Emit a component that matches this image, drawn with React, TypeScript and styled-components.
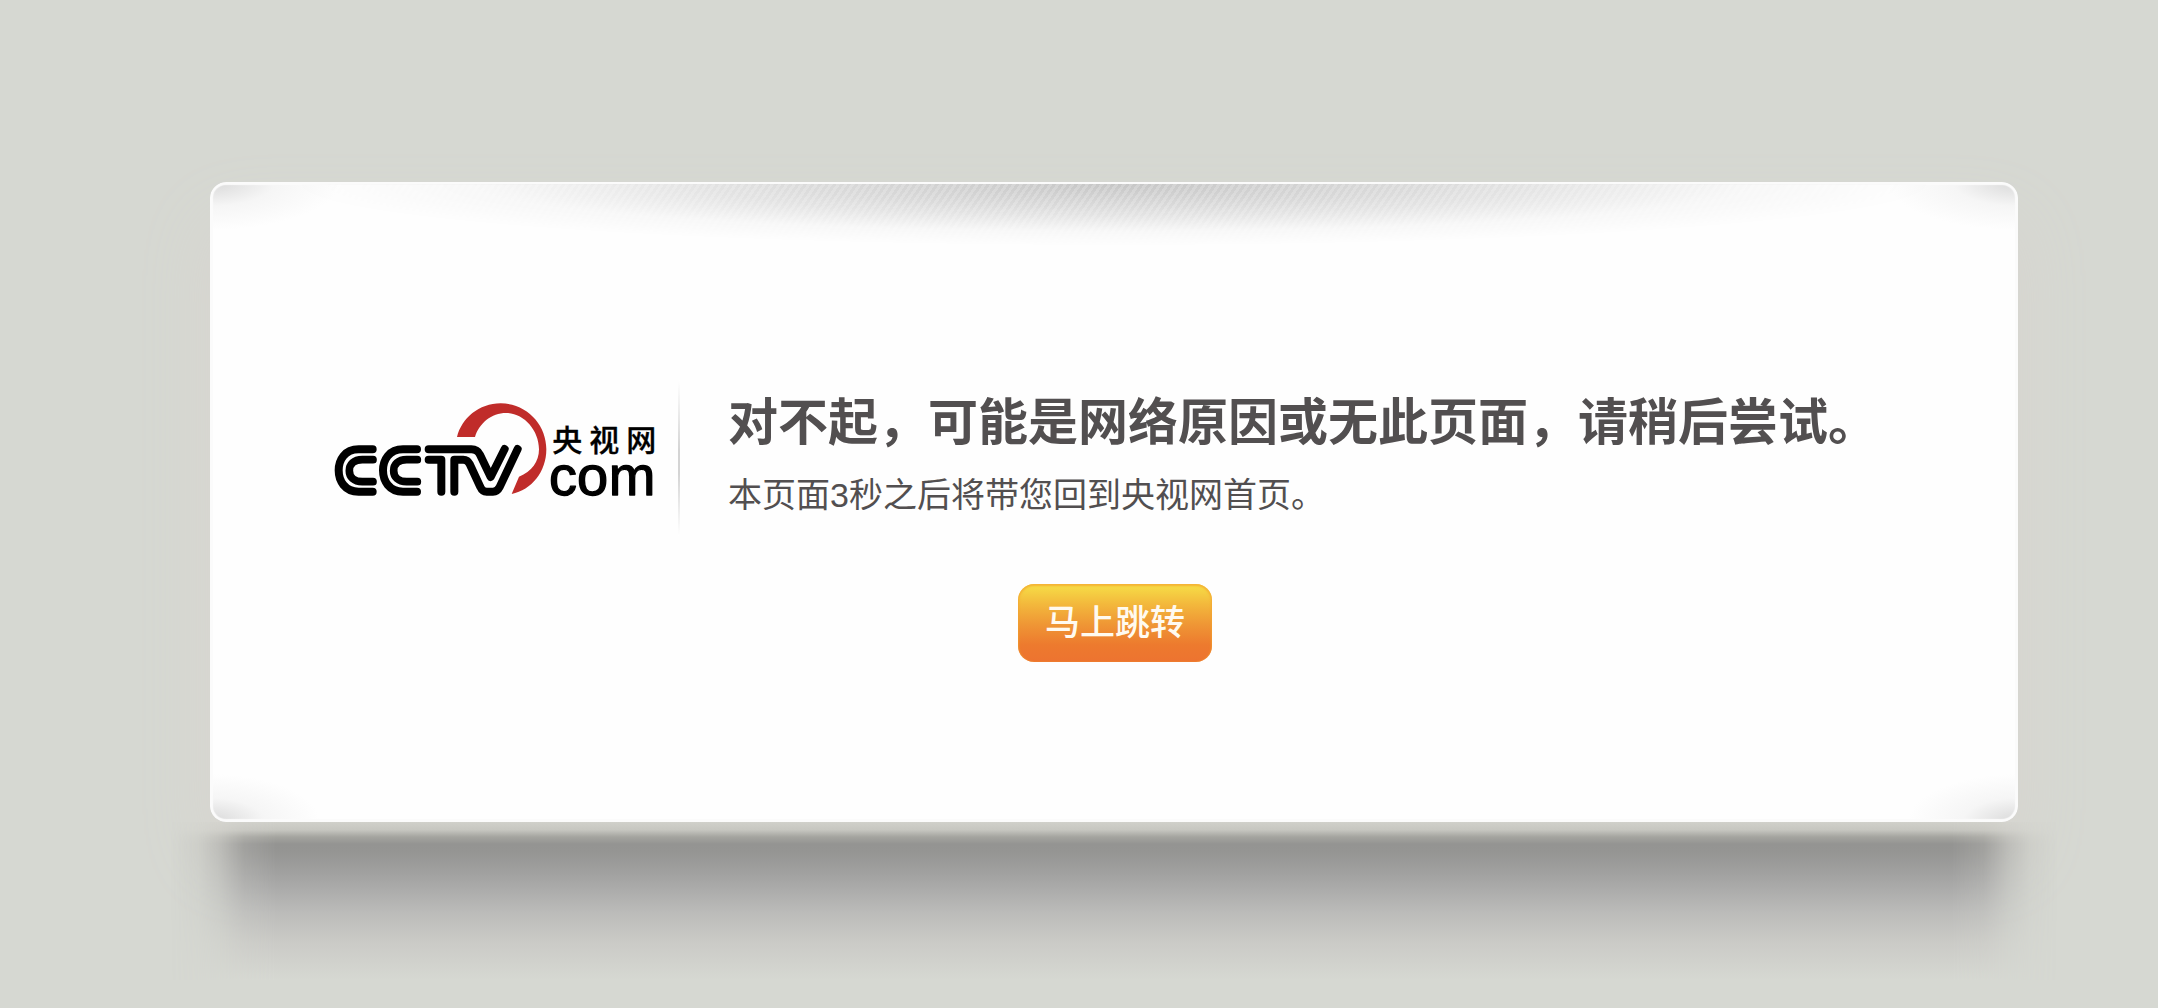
import React from "react";
import styled, { createGlobalStyle } from "styled-components";

const GlobalStyle = createGlobalStyle`
  *, *::before, *::after { box-sizing: border-box; }
  body {
    margin: 0;
    min-height: 100vh;
    background: #d6d8d2;
    color: #524f50;
    font-family: "Liberation Sans", "Noto Sans CJK SC", sans-serif;
  }
`;

const Page = styled.main`
  padding: 182px 140px 28px 210px;
`;

const Card = styled.section`
  position: relative;
  display: flex;
  flex-direction: column;
  gap: 48px;
  padding: 198px 28px 160px 122px;
  border-radius: 16px;
  background:
    radial-gradient(ellipse 130px 48px at 0 0, #d8d8d8, rgba(240, 240, 240, 0.6) 50%, rgba(255, 255, 255, 0)) left top / 50% 50% no-repeat,
    radial-gradient(ellipse 130px 48px at 100% 0, #d8d8d8, rgba(240, 240, 240, 0.6) 50%, rgba(255, 255, 255, 0)) right top / 50% 50% no-repeat,
    radial-gradient(ellipse 110px 48px at 0 100%, #d8d8d8, rgba(240, 240, 240, 0.6) 50%, rgba(255, 255, 255, 0)) left bottom / 50% 50% no-repeat,
    radial-gradient(ellipse 110px 48px at 100% 100%, #d8d8d8, rgba(240, 240, 240, 0.6) 50%, rgba(255, 255, 255, 0)) right bottom / 50% 50% no-repeat,
    #fefefe;
  box-shadow: inset 0 0 1px 3px #fbfbfb, 0 40px 70px #d7d4cf;
`;

const TopShade = styled.div`
  position: absolute;
  inset: 2px 4px auto;
  height: 62px;
  background:
    repeating-linear-gradient(125deg, rgba(255, 255, 255, 0.2) 0 3px, rgba(255, 255, 255, 0) 3px 6px),
    #c6c6c6;
  mask-image: radial-gradient(ellipse 46% 100% at 50% 0, #000 0%, rgba(0, 0, 0, 0.62) 38%, rgba(0, 0, 0, 0.12) 76%, transparent 100%);
`;

const Notice = styled.div`
  display: flex;
  align-items: stretch;
`;

const Brand = styled.a`
  display: block;
  flex: none;
  padding-top: 22px;
`;

const Divider = styled.span`
  flex: none;
  width: 2px;
  height: 156px;
  margin: 0 48px 0 22px;
  background: linear-gradient(#fff, #d4d4d4 45%, #d4d4d4 60%, #fff);
`;

const Message = styled.div`
  flex: 1;
  min-width: 0;
  padding-top: 11px;
`;

const Title = styled.h1`
  margin: 0;
  font-size: 50px;
  line-height: 64px;
  font-weight: 700;
`;

const Detail = styled.p`
  margin: 16px 0 0;
  font-size: 34px;
  line-height: 48px;
`;

const Actions = styled.div`
  display: flex;
  justify-content: center;
  margin-left: -92px;
`;

const JumpButton = styled.button`
  width: 194px;
  height: 78px;
  padding: 0;
  border: 0;
  border-radius: 16px;
  background: linear-gradient(#f6d945 4%, #f3b83c 26%, #ef9635 52%, #ed7a2e 78%, #ed7330);
  box-shadow: inset 0 1px 2px 1px rgba(243, 162, 46, 0.7);
  color: #fffaf0;
  font: inherit;
  font-size: 35px;
  font-weight: 500;
  line-height: 48px;
  cursor: pointer;
`;

const Shadow = styled.div`
  position: relative;
  height: 158px;
  margin: 0 -40px;
  background: linear-gradient(
    #d0d0ca 0,
    #c6c6c0 8px,
    #a4a49f 15px,
    #949492 22px,
    #959593 30px,
    #9f9f9e 48px,
    #acacab 68px,
    #bbbbb9 90px,
    #cbcbc7 122px,
    #d6d8d2 158px
  );
  mask-image: linear-gradient(
    to right,
    transparent 0,
    rgba(0, 0, 0, 0.12) 28px,
    rgba(0, 0, 0, 0.35) 48px,
    rgba(0, 0, 0, 0.8) 74px,
    #000 106px,
    #000 calc(100% - 106px),
    rgba(0, 0, 0, 0.8) calc(100% - 74px),
    rgba(0, 0, 0, 0.35) calc(100% - 48px),
    rgba(0, 0, 0, 0.12) calc(100% - 28px),
    transparent 100%
  );
`;

function Logo() {
  return (
    <svg width="324" height="96" viewBox="66 66 972 288" overflow="visible" role="img" aria-label="央视网">
      <path
        fill="#c02c2a"
        d="M441 171C455 115 507 70 572 70C650 70 709 133 709 208C709 275 665 330 605 342L627 290C665 275 687 245 687 208C687 150 640 99 588 99C545 99 507 130 495 171Z"
      />
      <g fill="none" stroke="#000" strokeLinecap="round" strokeLinejoin="round">
        <g strokeWidth="24">
          <path d="M188 208H146C104 208 86 240 86 271S104 335 146 335H188" />
          <path d="M321 208H279C237 208 219 240 219 271S237 335 279 335H321" />
        </g>
        <g strokeWidth="23">
          <path d="M189 239H157C131 239 118 254 118 272S131 305 157 305H189" />
          <path d="M322 239H290C264 239 251 254 251 272S264 305 290 305H322" />
        </g>
        <g strokeWidth="24">
          <path d="M356 239H394V335M433 335V239H460Q473 239 479 252L511 321Q517 335 530 335H549Q562 335 569 321L623 207" />
          <path d="M356 208H484Q502 208 510 224L542 291L584 207" />
        </g>
      </g>
      <g stroke="#000" strokeLinejoin="round">
        <text x="727 838 949" y="213" fontSize="90" fontWeight="500" strokeWidth="1" fontFamily='"Noto Sans CJK SC", sans-serif'>
          央视网
        </text>
        <text x="717 801 896" y="344" fontSize="168" strokeWidth="4" fontFamily='"Liberation Sans", sans-serif'>
          com
        </text>
      </g>
    </svg>
  );
}

export default function App() {
  return (
    <>
      <GlobalStyle />
      <Page lang="zh-CN">
        <Card>
          <TopShade />
          <Notice>
            <Brand href="#">
              <Logo />
            </Brand>
            <Divider />
            <Message>
              <Title>对不起，可能是网络原因或无此页面，请稍后尝试。</Title>
              <Detail>本页面3秒之后将带您回到央视网首页。</Detail>
            </Message>
          </Notice>
          <Actions>
            <JumpButton type="button">马上跳转</JumpButton>
          </Actions>
        </Card>
        <Shadow />
      </Page>
    </>
  );
}
